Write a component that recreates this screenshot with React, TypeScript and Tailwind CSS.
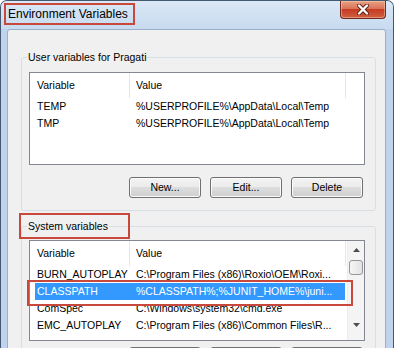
import React from "react";

function Button({ label }: { label?: string }) {
  return (
    <div className="w-[72px] h-[21px] shrink-0 rounded-[3px] border border-[#707070] bg-[linear-gradient(to_bottom,#f3f3f3_0%,#ebebeb_48%,#dddddd_50%,#cfcfcf_100%)] shadow-[inset_0_0_0_1px_#fbfbfb] flex items-center justify-center text-[10.5px] text-black">
      {label}
    </div>
  );
}

function Header() {
  return (
    <div className="flex h-[25px] shrink-0 bg-white">
      <div className="w-[100px] h-full pl-[7px] flex items-center border-r border-[#e3e6ea]">Variable</div>
      <div className="w-[216px] h-full pl-[6px] flex items-center border-r border-[#e3e6ea]">Value</div>
    </div>
  );
}

function Row({ name, value, selected }: { name: string; value: string; selected?: boolean }) {
  return (
    <div className="flex h-[17px] shrink-0 pl-[5px]">
      <div
        className={
          selected
            ? "flex w-[310px] h-full items-center bg-[#3399ff] text-white"
            : "flex w-[310px] h-full items-center text-black"
        }
      >
        <div className="w-[95px] pl-[2px] whitespace-nowrap overflow-hidden">{name}</div>
        <div className="pl-[6px] whitespace-nowrap overflow-hidden">{value}</div>
      </div>
    </div>
  );
}

function UpArrow() {
  return (
    <svg width="7" height="4" viewBox="0 0 7 4">
      <path d="M0 4 L3.5 0 L7 4 Z" fill="#4d4d4d" />
    </svg>
  );
}

function DownArrow() {
  return (
    <svg width="7" height="4" viewBox="0 0 7 4">
      <path d="M0 0 L7 0 L3.5 4 Z" fill="#4d4d4d" />
    </svg>
  );
}

export default function App() {
  return (
    <div className="relative w-[394px] h-[348px] overflow-hidden flex flex-col bg-[#bfd4ec] border-l border-t border-r border-[#44586f] rounded-t-[7px] font-['Liberation_Sans',Arial,sans-serif] text-[10.5px] text-black">
      {/* Title bar */}
      <div className="h-[28px] shrink-0 flex items-start justify-between bg-[linear-gradient(to_bottom,#dbe8f6,#c7daef)]">
        <div className="ml-[3px] mt-[2px] w-[131px] h-[22px] border-2 border-[#c9483c] pl-[2px] flex items-center text-[12px] text-black whitespace-nowrap">
          Environment Variables
        </div>
        <div className="mr-[7px] w-[46px] h-[18px] rounded-b-[4px] border border-t-0 border-[#6e2a20] bg-[linear-gradient(to_bottom,#e9a182_0%,#d9735a_45%,#c63c24_50%,#d0603f_100%)] shadow-[inset_0_0_0_1px_rgba(255,215,190,0.45)] flex items-center justify-center">
          <svg width="12" height="11" viewBox="0 0 12 11">
            <path d="M2 1.5 L10 9.5 M10 1.5 L2 9.5" stroke="#5a1c12" strokeWidth="4" strokeLinecap="round" />
            <path d="M2 1.5 L10 9.5 M10 1.5 L2 9.5" stroke="#ffffff" strokeWidth="2.4" strokeLinecap="round" />
          </svg>
        </div>
      </div>

      {/* Client area */}
      <div className="flex-1 pl-[6px] pr-[7px] flex flex-col">
        <div className="flex-1 bg-[#f0f0f0] border border-[#9aafc8] rounded-t-[3px] flex flex-col">
          {/* User variables group */}
          <fieldset className="ml-[13px] mt-[21px] w-[355px] p-0 border border-[#d5dfe5] rounded-[3px]">
            <legend className="ml-[5px] px-[1px] leading-[13px] text-[10.5px] text-black">User variables for Pragati</legend>
            <div className="pl-[7px] pt-[8px] pb-[12px]">
              <div className="w-[336px] h-[93px] border border-[#828790] bg-white flex flex-col overflow-hidden">
                <Header />
                <Row name="TEMP" value={"%USERPROFILE%\\AppData\\Local\\Temp"} />
                <Row name="TMP" value={"%USERPROFILE%\\AppData\\Local\\Temp"} />
              </div>
              <div className="mt-[12px] w-[336px] pr-[2px] flex justify-end gap-[9px]">
                <Button label="New..." />
                <Button label="Edit..." />
                <Button label="Delete" />
              </div>
            </div>
          </fieldset>

          {/* System variables group */}
          <fieldset className="ml-[13px] mt-[9px] w-[355px] p-0 border border-[#d5dfe5] rounded-[3px]">
            <legend className="ml-[5px] px-[1px] leading-[13px] text-[10.5px] text-black">System variables</legend>
            <div className="pl-[7px] pt-[7px] pb-[12px]">
              <div className="w-[336px] h-[101px] border border-[#828790] bg-white flex overflow-hidden">
                <div className="flex-1 flex flex-col overflow-hidden">
                  <Header />
                  <Row name="BURN_AUTOPLAY" value={"C:\\Program Files (x86)\\Roxio\\OEM\\Roxi..."} />
                  <Row name="CLASSPATH" value={"%CLASSPATH%;%JUNIT_HOME%\\juni..."} selected />
                  <Row name="ComSpec" value={"C:\\Windows\\system32\\cmd.exe"} />
                  <Row name="EMC_AUTOPLAY" value={"C:\\Program Files (x86)\\Common Files\\R..."} />
                </div>
                <div className="w-[17px] shrink-0 flex flex-col bg-[#f4f4f4] border-l border-[#ececec]">
                  <div className="h-[17px] flex items-center justify-center">
                    <UpArrow />
                  </div>
                  <div className="mt-[2px] mx-[1px] h-[15px] rounded-[3px] border border-[#979797] bg-[linear-gradient(to_right,#f6f6f6,#e2e2e2)]" />
                  <div className="flex-1" />
                  <div className="h-[24px] pb-[6px] flex items-center justify-center">
                    <DownArrow />
                  </div>
                </div>
              </div>
              <div className="mt-[6px] w-[336px] pr-[2px] flex justify-end gap-[9px]">
                <Button />
                <Button />
                <Button />
              </div>
            </div>
          </fieldset>
        </div>
      </div>

      {/* Annotation boxes */}
      <div className="absolute left-[18px] top-[212px] w-[111px] h-[26px] border-2 border-[#c9483c]" />
      <div className="absolute left-[26px] top-[279px] w-[326px] h-[26px] border-2 border-[#c9483c]" />
    </div>
  );
}
